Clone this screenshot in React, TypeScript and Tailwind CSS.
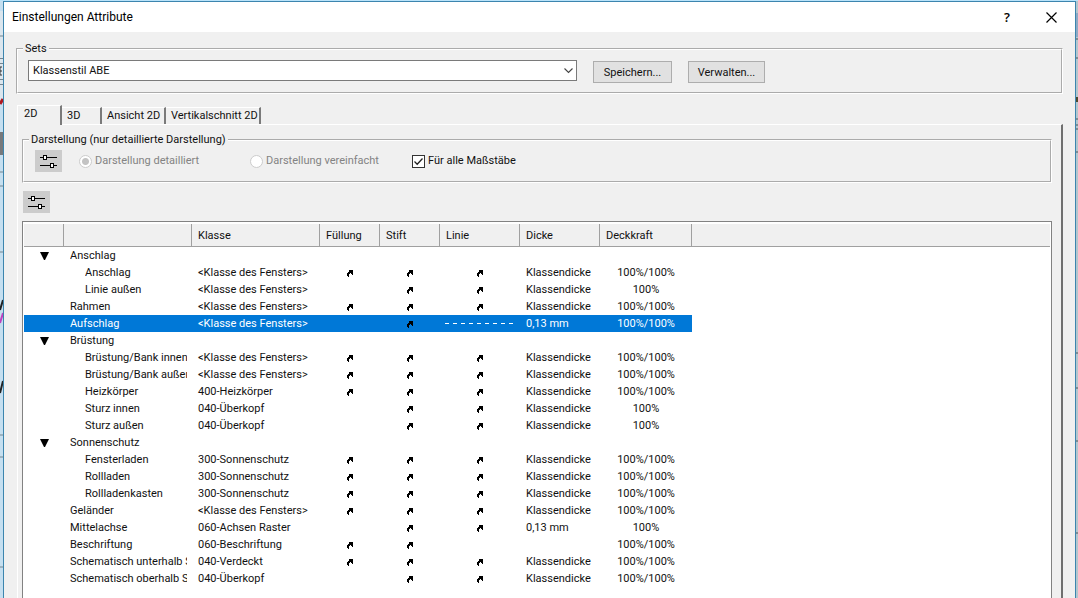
import { useState } from 'react';
import type { ReactNode } from 'react';

type Row = {
  name: string;
  level: 0 | 1;
  group?: boolean;
  klasse?: string;
  fill?: boolean;
  pen?: boolean;
  line?: 'arrow' | 'dash';
  width?: string;
  opacity?: string;
};

const FK = '<Klasse des Fensters>';
const KD = 'Klassendicke';
const FULL = '100%/100%';

const rows: Row[] = [
  { name: 'Anschlag', level: 0, group: true },
  { name: 'Anschlag', level: 1, klasse: FK, fill: true, pen: true, line: 'arrow', width: KD, opacity: FULL },
  { name: 'Linie außen', level: 1, klasse: FK, pen: true, line: 'arrow', width: KD, opacity: '100%' },
  { name: 'Rahmen', level: 0, klasse: FK, fill: true, pen: true, line: 'arrow', width: KD, opacity: FULL },
  { name: 'Aufschlag', level: 0, klasse: FK, pen: true, line: 'dash', width: '0,13 mm', opacity: FULL },
  { name: 'Brüstung', level: 0, group: true },
  { name: 'Brüstung/Bank innen', level: 1, klasse: FK, fill: true, pen: true, line: 'arrow', width: KD, opacity: FULL },
  { name: 'Brüstung/Bank außen', level: 1, klasse: FK, fill: true, pen: true, line: 'arrow', width: KD, opacity: FULL },
  { name: 'Heizkörper', level: 1, klasse: '400-Heizkörper', fill: true, pen: true, line: 'arrow', width: KD, opacity: FULL },
  { name: 'Sturz innen', level: 1, klasse: '040-Überkopf', pen: true, line: 'arrow', width: KD, opacity: '100%' },
  { name: 'Sturz außen', level: 1, klasse: '040-Überkopf', pen: true, line: 'arrow', width: KD, opacity: '100%' },
  { name: 'Sonnenschutz', level: 0, group: true },
  { name: 'Fensterladen', level: 1, klasse: '300-Sonnenschutz', fill: true, pen: true, line: 'arrow', width: KD, opacity: FULL },
  { name: 'Rollladen', level: 1, klasse: '300-Sonnenschutz', fill: true, pen: true, line: 'arrow', width: KD, opacity: FULL },
  { name: 'Rollladenkasten', level: 1, klasse: '300-Sonnenschutz', fill: true, pen: true, line: 'arrow', width: KD, opacity: FULL },
  { name: 'Geländer', level: 0, klasse: FK, fill: true, pen: true, line: 'arrow', width: KD, opacity: FULL },
  { name: 'Mittelachse', level: 0, klasse: '060-Achsen Raster', pen: true, line: 'arrow', width: '0,13 mm', opacity: '100%' },
  { name: 'Beschriftung', level: 0, klasse: '060-Beschriftung', fill: true, pen: true, opacity: FULL },
  { name: 'Schematisch unterhalb S', level: 0, klasse: '040-Verdeckt', fill: true, pen: true, line: 'arrow', width: KD, opacity: FULL },
  { name: 'Schematisch oberhalb Sc', level: 0, klasse: '040-Überkopf', pen: true, line: 'arrow', width: KD, opacity: FULL },
];

const headers = ['', '', 'Klasse', 'Füllung', 'Stift', 'Linie', 'Dicke', 'Deckkraft'];

function ClassArrow() {
  return (
    <svg className="mx-auto block" width="6" height="7" viewBox="0 0 6 7" shapeRendering="crispEdges" aria-hidden="true">
      <path d="M2 0h4v1h-4zM2 1h4v1h-4zM1 2h5v1h-5zM0 3h3v1h-3zM4 3h2v1h-2zM0 4h2v1h-2zM5 4h1v1h-1zM0 5h2v1h-2zM1 6h1v1h-1z" fill="#000" />
    </svg>
  );
}

function DashLine() {
  return (
    <svg className="mx-auto block" width="70" height="3" viewBox="0 0 70 3" shapeRendering="crispEdges" aria-hidden="true">
      <path d="M0 .5h70" stroke="#fff" strokeDasharray="4 4" />
    </svg>
  );
}

function SliderButton({ label }: { label: string }) {
  return (
    <button type="button" aria-label={label} className="flex h-[22px] w-[27px] shrink-0 items-center justify-center bg-[#cccccc]">
      <svg width="17" height="14" viewBox="0 0 17 14" shapeRendering="crispEdges" aria-hidden="true">
        <path d="M0 3.5h17M0 11.5h17" stroke="#000" />
        <rect x="3.5" y="1.5" width="3" height="4" fill="#fff" stroke="#000" />
        <rect x="10.5" y="9.5" width="3" height="4" fill="#fff" stroke="#000" />
      </svg>
    </button>
  );
}

function Group({ title, children }: { title: string; children: ReactNode }) {
  return (
    <fieldset className="min-w-0 border-2 border-white [border-style:groove]">
      <legend className="ml-[5px] px-[2px] leading-[14px]">{title}</legend>
      {children}
    </fieldset>
  );
}

function PushButton({ children }: { children: ReactNode }) {
  return (
    <button type="button" className="h-[22px] border border-[#adadad] bg-[#e1e1e1] pt-px text-center">
      {children}
    </button>
  );
}

function ModeRadio({ label, checked }: { label: string; checked?: boolean }) {
  return (
    <label className="flex items-center gap-[3px] text-[#838383]">
      <input
        type="radio"
        name="darstellung"
        disabled
        defaultChecked={checked}
        className="size-[13px] appearance-none rounded-full border border-[#cccccc] bg-white checked:bg-[radial-gradient(circle,#c3c3c3_3px,#ffffff_4px)]"
      />
      {label}
    </label>
  );
}

const tabs = ['2D', '3D', 'Ansicht 2D', 'Vertikalschnitt 2D'];
const tabWidths = ['w-[45px]', 'w-[40px]', 'w-[64px]', 'w-[95px]'];

export default function App() {
  const [tab, setTab] = useState(0);
  const [selected, setSelected] = useState(4);

  return (
    <div className="flex h-screen overflow-hidden bg-[#b9e3fa] pt-px font-['Roboto','Liberation_Sans',sans-serif] text-[11px] leading-[14px] text-[#111111]">
      <svg className="h-full w-[3px] shrink-0" preserveAspectRatio="xMinYMin slice" viewBox="0 0 3 598" aria-hidden="true">
        <path d="M0 0h3v598h-3z" fill="#c5dff0" />
        <path d="M0 10h3v90h-3z" fill="#dbe6ee" />
        <path d="M0 35h3M0 57.5h3M0 62.5h3M0 78.5h3M0 83.5h3M0 171h3M0 185h3M0 251h3M0 434h3M0 456h3M0 566h3" stroke="#75858f" />
        <path d="M0 66h2M0 70h2M0 74h2M0 66v8" stroke="#333" />
        <path d="M0 103l3-5" stroke="#b01820" strokeWidth="3" />
        <path d="M0 131h3v23h-3z" fill="#77797c" />
        <path d="M0 309l3-10M0 392l3-12" stroke="#222" strokeWidth="2" />
        <path d="M0 322l3-10" stroke="#c040c0" strokeWidth="2" />
      </svg>

      <main className="flex min-w-0 flex-1 flex-col border-x border-t border-[#3c85ae] bg-[#f0f0f0]">
        <header className="flex h-[30px] shrink-0 items-center bg-white pr-[18px] pl-2 text-black">
          <h1 className="flex-1 text-[12px]">Einstellungen Attribute</h1>
          <button type="button" aria-label="Hilfe" className="w-6 font-['Open_Sans',sans-serif] text-[13px] font-semibold">
            ?
          </button>
          <button type="button" aria-label="Schließen" className="ml-[27px]">
            <svg width="11" height="11" viewBox="0 0 11 11" aria-hidden="true">
              <path d="M.5.5l10 10M10.5.5l-10 10" stroke="#000" strokeWidth="1.2" />
            </svg>
          </button>
        </header>

        <div className="flex min-h-0 flex-1 flex-col pt-[10px] pr-3 pl-3">
          <Group title="Sets">
            <div className="flex items-start pt-[4px] pb-[9px] pl-[10px]">
              <div className="relative w-[549px]">
                <select
                  aria-label="Set"
                  className="block h-[21px] w-full appearance-none border border-[#7a7a7a] bg-white pl-1"
                  defaultValue="abe"
                >
                  <option value="abe">Klassenstil ABE</option>
                </select>
                <svg className="pointer-events-none absolute top-[8px] right-[4px]" width="9" height="6" viewBox="0 0 9 6" aria-hidden="true">
                  <path d="M.5.5l4 4 4-4" fill="none" stroke="#444" strokeWidth="1.1" />
                </svg>
              </div>
              <div className="ml-4 flex gap-4 pt-px">
                <div className="grid w-[79px]"><PushButton>Speichern...</PushButton></div>
                <div className="grid w-[77px]"><PushButton>Verwalten...</PushButton></div>
              </div>
            </div>
          </Group>

          <div role="tablist" className="mt-[10px] ml-px flex h-[20px] shrink-0 items-end">
            {tabs.map((t, i) => (
              <button
                key={t}
                type="button"
                role="tab"
                aria-selected={i === tab}
                onClick={() => setTab(i)}
                className={`${tabWidths[i]} shrink-0 border-t border-r-2 border-t-white border-r-[#7a7a7a] text-left whitespace-nowrap ${
                  i === tab ? 'z-10 -mb-px h-[20px] border-l border-l-white bg-[#f0f0f0] pb-[3px] pl-[6px]' : 'h-[17px] pl-[5px]'
                }`}
              >
                {t}
              </button>
            ))}
          </div>

          <section
            role="tabpanel"
            className="ml-px flex min-h-0 flex-1 flex-col border-t border-r-2 border-l border-t-white border-r-[#6f6f6f] border-l-white pt-2 pr-[9px] pl-1"
          >
            <Group title="Darstellung (nur detaillierte Darstellung)">
              <div className="flex items-center pt-[3px] pb-[9px] pl-[11px]">
                <SliderButton label="Darstellung einstellen" />
                <div className="ml-[17px] w-[171px]">
                  <ModeRadio label="Darstellung detailliert" checked />
                </div>
                <div className="w-[162px]">
                  <ModeRadio label="Darstellung vereinfacht" />
                </div>
                <label className="flex items-center gap-[3px]">
                  <span className="relative block size-[13px]">
                    <input type="checkbox" defaultChecked className="peer block size-[13px] appearance-none border border-[#333] bg-white" />
                    <svg className="pointer-events-none invisible absolute inset-0 peer-checked:visible" width="13" height="13" viewBox="0 0 13 13" aria-hidden="true">
                      <path d="M2.5 6.5l2.7 2.7 5.3-5.7" fill="none" stroke="#222" strokeWidth="1.3" />
                    </svg>
                  </span>
                  Für alle Maßstäbe
                </label>
              </div>
            </Group>

            <div className="mt-2 pl-px">
              <SliderButton label="Attribute einstellen" />
            </div>

            <div className="mt-2 min-h-0 flex-1 overflow-hidden border-x border-t border-[#828282] bg-white px-px pt-[2px]">
              <table className="w-full table-fixed border-separate border-spacing-0">
                <colgroup>
                  <col className="w-[40px]" />
                  <col className="w-[128px]" />
                  <col className="w-[128px]" />
                  <col className="w-[60px]" />
                  <col className="w-[60px]" />
                  <col className="w-[80px]" />
                  <col className="w-[80px]" />
                  <col className="w-[92px]" />
                  <col />
                </colgroup>
                <thead>
                  <tr className="bg-[#f0f0f0]">
                    {headers.map((h, i) => (
                      <th key={i} className="h-[23px] border-r border-b border-[#a0a0a0] p-0 pt-px pl-[6px] text-left font-normal">
                        {h}
                      </th>
                    ))}
                    <th className="border-b border-[#a0a0a0] p-0" />
                  </tr>
                </thead>
                <tbody>
                  {rows.map((r, i) => (
                    <tr
                      key={i}
                      onClick={() => setSelected(i)}
                      className={`h-[17px] leading-[16px] [&>td]:pt-px ${i === selected ? 'text-white [&>td:not(:last-child)]:bg-[#0078d7]' : ''}`}
                    >
                      <td className="p-0">
                        {r.group && (
                          <svg className="mx-auto block" width="9" height="8" viewBox="0 0 9 8" aria-hidden="true">
                            <path d="M0 0h9l-4 8h-1z" fill="#000" />
                          </svg>
                        )}
                      </td>
                      <td className={`p-0 pr-[5px] ${r.level === 1 ? 'pl-[21px]' : 'pl-[6px]'}`}>
                        <div className="overflow-hidden whitespace-nowrap">{r.name}</div>
                      </td>
                      <td className="p-0 pl-[6px] whitespace-nowrap">{r.klasse}</td>
                      <td className="p-0">{r.fill && <ClassArrow />}</td>
                      <td className="p-0">{r.pen && <ClassArrow />}</td>
                      <td className="p-0">
                        {r.line === 'arrow' && <ClassArrow />}
                        {r.line === 'dash' && <DashLine />}
                      </td>
                      <td className="p-0 pl-[6px] whitespace-nowrap">{r.width}</td>
                      <td className="p-0 text-center">{r.opacity}</td>
                      <td className="p-0" />
                    </tr>
                  ))}
                </tbody>
              </table>
            </div>
          </section>
        </div>
      </main>

      <svg className="h-full w-[2px] shrink-0" preserveAspectRatio="xMinYMin slice" viewBox="0 0 2 598" aria-hidden="true">
        <path d="M0 0h2v598h-2z" fill="#b3c6ce" />
        <path d="M0 12h2v24h-2z" fill="#8fa9c4" />
        <path d="M0 38h2M0 57h2M0 118h2M0 124h2M0 128h2M0 151h2M0 352h2M0 387h2M0 440h2M0 532h2" stroke="#4c5559" />
        <path d="M0 96h2v5h-2z" fill="#4d4a30" />
      </svg>
    </div>
  );
}
